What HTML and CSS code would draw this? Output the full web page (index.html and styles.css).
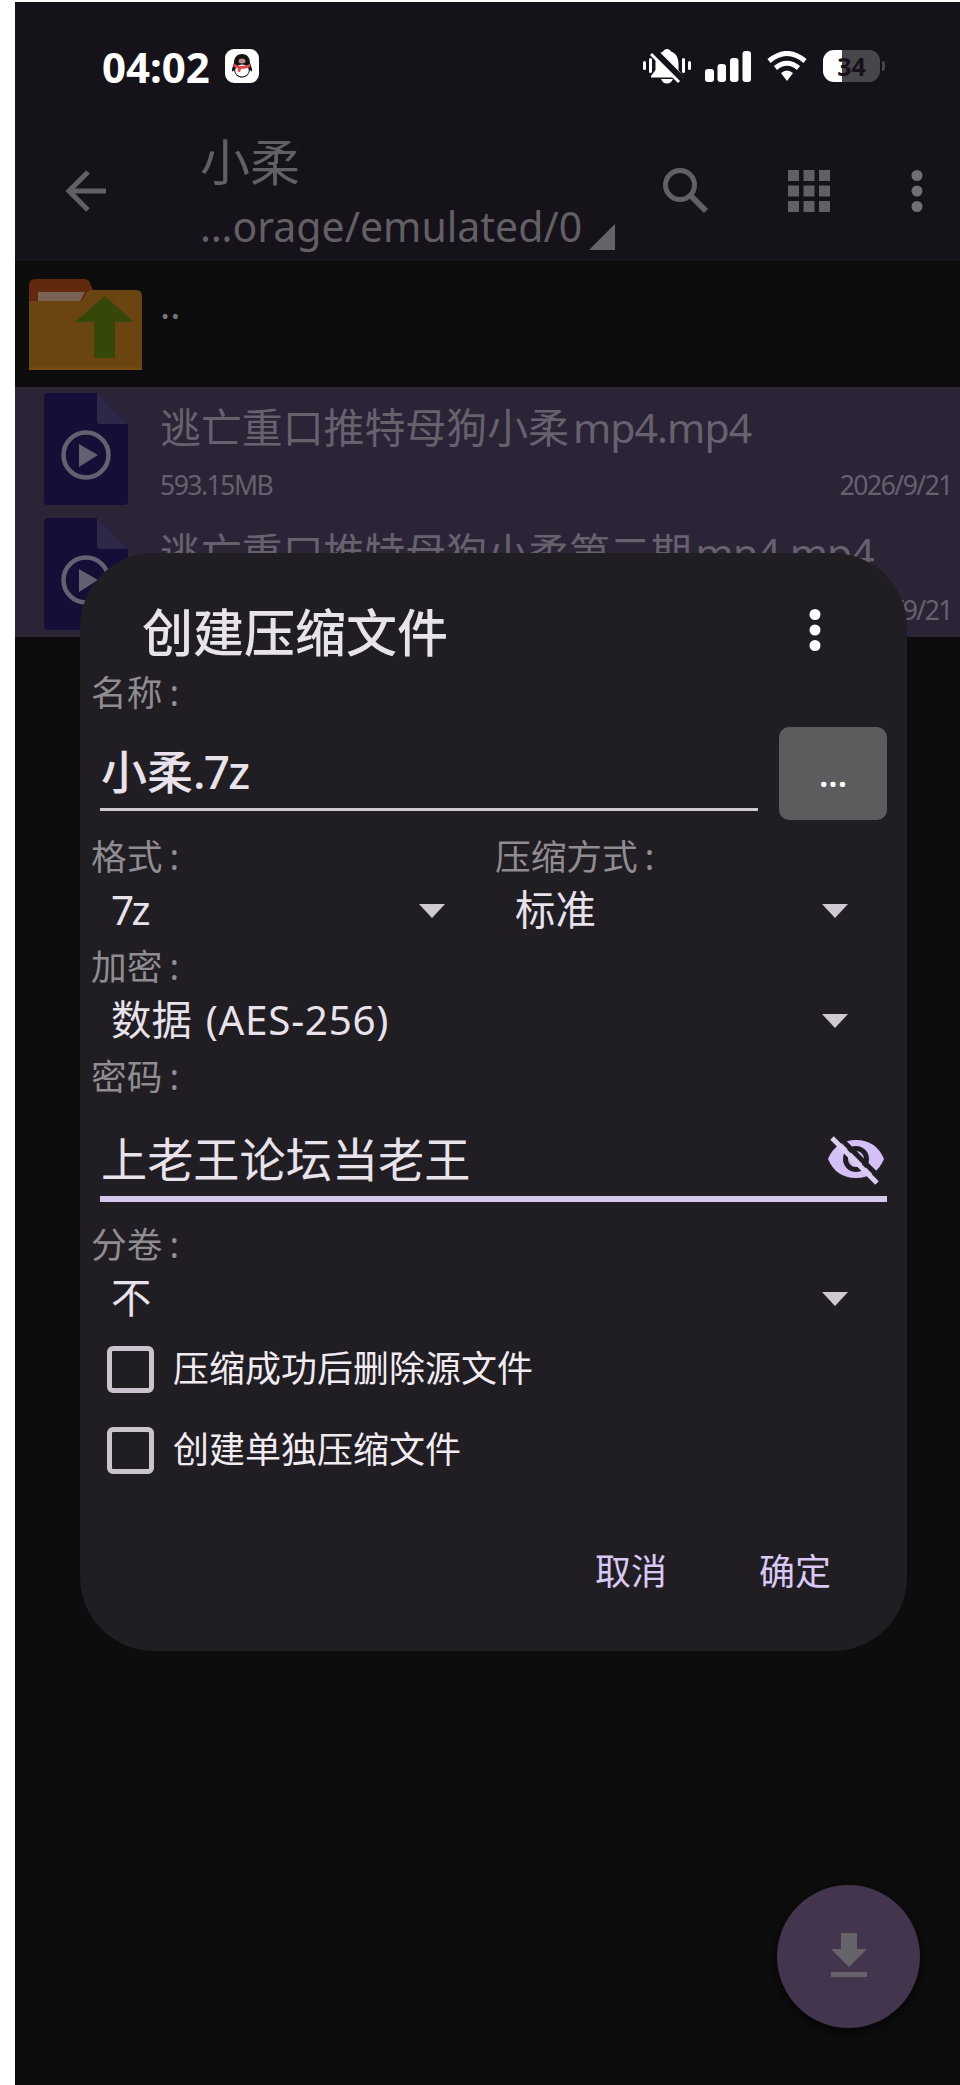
FILE: index.html
```html
<!DOCTYPE html>
<html lang="zh-CN">
<head>
<meta charset="utf-8">
<title>创建压缩文件</title>
<link rel="stylesheet" href="styles.css">
</head>
<body>
<div class="phone">
  <header class="top">
    <div class="status">
      <span class="time">04:02</span>
      <svg class="qq" width="34" height="34" viewBox="0 0 34 34">
        <rect width="34" height="34" rx="9" fill="#fff"/>
        <path d="M17 5C11.500 5 9 9 9 14L7 20C6.500 23 8 23 9 21C10 26 13 28.500 17 28.500S24 26 25 21C26 23 27.500 23 27 20L25 14C25 9 22.500 5 17 5Z" fill="#17120f"/>
        <ellipse cx="17" cy="21.500" rx="6.800" ry="6" fill="#fff"/>
        <ellipse cx="17" cy="12" rx="3.500" ry="2.500" fill="#b98d84"/>
        <path d="M9 15Q17 19 25 15L25 18Q21 20 16 20L15 23L12.500 22.500L13 19.500Q10 19 8.500 17.500Z" fill="#e2474a"/>
      </svg>
      <span class="grow"></span>
      <svg class="bell" width="50" height="36" viewBox="0 0 50 36">
        <g fill="#fff"><path d="M25 1C27 1 28 2 29 3.500C34 5 36.500 10 36.500 16V22L41 28V29.500H9V28L13.500 22V14C13.500 8 17 5 21 3.500C22 2 23 1 25 1Z"/><path d="M19 31H31Q29 35.500 25 35.500T19 31Z"/>
        <rect x="1" y="13" width="3" height="9" rx="1.500"/><rect x="7" y="10" width="3" height="15" rx="1.500"/><rect x="40" y="10" width="3" height="15" rx="1.500"/><rect x="46" y="13" width="3" height="9" rx="1.500"/></g>
        <path d="M11 3L39 31" stroke="#151219" stroke-width="8"/><path d="M9 6L37 34" stroke="#fff" stroke-width="3"/>
      </svg>
      <svg class="signal" width="46" height="31" viewBox="0 0 46 31" fill="#fff">
        <rect x="0" y="18" width="9" height="13" rx="3"/><rect x="12.500" y="13" width="8.500" height="18" rx="3"/><rect x="25" y="7" width="8.500" height="24" rx="3"/><rect x="37.500" y="0" width="8.500" height="31" rx="3"/>
      </svg>
      <svg class="wifi" width="40" height="30" viewBox="0 0 40 30">
        <path d="M2 10Q20 -5 38 10" fill="none" stroke="#fff" stroke-width="5"/><path d="M8.500 17Q20 7.500 31.500 17" fill="none" stroke="#fff" stroke-width="5"/><path d="M14 22Q20 17 26 22L20 30Z" fill="#fff"/>
      </svg>
      <span class="battery"><b>34</b></span><span class="nub"></span>
    </div>
    <div class="appbar">
      <svg class="back" width="42" height="42" viewBox="0 0 42 42" fill="none" stroke="#625f65" stroke-width="5"><path d="M41 21H4M23 2L4 21L23 40"/></svg>
      <div class="heading">
        <div class="folder">小柔</div>
        <div class="path"><span class="pathtext">…orage/emulated/0</span><svg width="26" height="26" viewBox="0 0 26 26"><path d="M26 0V26H0Z" fill="#656268"/></svg></div>
      </div>
      <svg class="search" width="46" height="46" viewBox="0 0 46 46" fill="none" stroke="#625f65"><circle cx="17" cy="17" r="14.500" stroke-width="5"/><path d="M27 27L43 43" stroke-width="6"/></svg>
      <svg class="gridicon" width="42" height="42" viewBox="0 0 42 42" fill="#625f65"><path d="M0 0h11v11H0zM15.500 0h11v11h-11zM31 0h11v11H31zM0 15.500h11v11H0zM15.500 15.500h11v11h-11zM31 15.500h11v11H31zM0 31h11v11H0zM15.500 31h11v11h-11zM31 31h11v11H31z"/></svg>
      <svg class="dots" width="12" height="42" viewBox="0 0 12 42" fill="#716e74"><circle cx="6" cy="5.500" r="5.500"/><circle cx="6" cy="21" r="5.500"/><circle cx="6" cy="36.500" r="5.500"/></svg>
    </div>
  </header>

  <main class="files">
    <div class="up">
      <svg width="113" height="91" viewBox="0 0 113 91">
        <path d="M0 30V6Q0 0 6 0H55Q59 0 61 4L66 16V30Z" fill="#612a0d"/>
        <path d="M0 22H50Q54 22 56 17Q58 11 64 11H107Q113 11 113 17V91H0Z" fill="#6a4512"/>
        <path d="M9 13H56L51 22H9Z" fill="#786353"/><path d="M0 88.500H113V91H0Z" fill="#7a4e12"/>
        <path d="M76 17L105 43H86V79H65V43H46Z" fill="#354709"/>
      </svg>
      <span class="dotdot">..</span>
    </div>
    <div class="file">
      <svg class="doc" width="84" height="112" viewBox="0 0 84 112"><path d="M4 0H53L84 31V108Q84 112 80 112H4Q0 112 0 108V4Q0 0 4 0Z" fill="#150e37"/><path d="M53 0L84 31H56Q53 31 53 28Z" fill="#2d2848"/><circle cx="42" cy="62" r="22.500" fill="none" stroke="#63606f" stroke-width="4.500"/><path d="M35 51L54 62L35 74Z" fill="#63606f"/></svg>
      <div class="info"><div class="name">逃亡重口推特母狗小柔<span class="ext">mp4.mp4</span></div><div class="meta"><span class="size">593.15MB</span><span>2026/9/21</span></div></div>
    </div>
    <div class="file">
      <svg class="doc" width="84" height="112" viewBox="0 0 84 112"><path d="M4 0H53L84 31V108Q84 112 80 112H4Q0 112 0 108V4Q0 0 4 0Z" fill="#150e37"/><path d="M53 0L84 31H56Q53 31 53 28Z" fill="#2d2848"/><circle cx="42" cy="62" r="22.500" fill="none" stroke="#63606f" stroke-width="4.500"/><path d="M35 51L54 62L35 74Z" fill="#63606f"/></svg>
      <div class="info"><div class="name">逃亡重口推特母狗小柔第二期<span class="ext">mp4.mp4</span></div><div class="meta"><span></span><span>2026/9/21</span></div></div>
    </div>
  </main>

  <div class="fab"><svg width="36" height="44" viewBox="0 0 36 44" fill="#67636a"><path d="M10 0H26V16H36L18 34L0 16H10Z"/><path d="M0 39H36V44H0Z"/></svg></div>

  <section class="dialog">
    <div class="titlebar"><h1>创建压缩文件</h1><svg width="12" height="42" viewBox="0 0 12 42" fill="#fff"><circle cx="6" cy="5.500" r="5.500"/><circle cx="6" cy="21" r="5.500"/><circle cx="6" cy="36.500" r="5.500"/></svg></div>
    <div class="label">名称<i>:</i></div>
    <div class="namerow"><div class="field">小柔<span class="seven">.7z</span></div><div class="more">...</div></div>
    <div class="pair">
      <div class="col left"><div class="label">格式<i>:</i></div><div class="select"><span class="fmt">7z</span><svg width="26" height="14" viewBox="0 0 26 14"><path d="M0 0H26L13 14Z"/></svg></div></div>
      <div class="col"><div class="label">压缩方式<i>:</i></div><div class="select"><span>标准</span><svg width="26" height="14" viewBox="0 0 26 14"><path d="M0 0H26L13 14Z"/></svg></div></div>
    </div>
    <div class="label">加密<i>:</i></div>
    <div class="select"><span>数据<span class="aes">(AES-256)</span></span><svg width="26" height="14" viewBox="0 0 26 14"><path d="M0 0H26L13 14Z"/></svg></div>
    <div class="label">密码<i>:</i></div>
    <div class="password"><span>上老王论坛当老王</span>
      <svg width="58" height="52" viewBox="0 0 58 52"><path d="M1 25Q9 6 29 6T57 25Q49 44 29 44T1 25Z" fill="#d4bff7"/><circle cx="29" cy="25" r="10.500" fill="none" stroke="#201d23" stroke-width="5"/><path d="M11 2L54 45" stroke="#201d23" stroke-width="5"/><path d="M5 4L50 49" stroke="#dccdf2" stroke-width="5"/></svg>
    </div>
    <div class="label">分卷<i>:</i></div>
    <div class="select"><span>不</span><svg width="26" height="14" viewBox="0 0 26 14"><path d="M0 0H26L13 14Z"/></svg></div>
    <div class="check"><span class="box"></span><span>压缩成功后删除源文件</span></div>
    <div class="check"><span class="box"></span><span>创建单独压缩文件</span></div>
    <div class="actions"><span>取消</span><span>确定</span></div>
  </section>
</div>
</body>
</html>
```
FILE: styles.css
```css
* { box-sizing: border-box; }
body { margin: 0; background: #fff; font-family: "Noto Sans", "Noto Sans CJK SC", sans-serif; }
svg { display: block; flex: none; }
.phone { position: relative; width: 945px; height: 2083px; margin: 2px 0 0 15px; background: #0d0d0e; overflow: hidden; white-space: nowrap; }
.top { height: 260px; background: #151219; border-bottom: 1px solid #0a090c; }
.status { display: flex; align-items: center; height: 128px; padding-left: 87px; }
.time { font-size: 42px; font-weight: 700; color: #fff; }
.qq { margin-left: 15px; }
.grow { flex: 1; }
.bell { margin-right: 13px; }
.signal { margin-right: 16px; }
.wifi { margin-right: 16px; }
.battery { width: 57px; height: 32px; border-radius: 11px; background: linear-gradient(90deg, #fff 0 19px, #49464b 19px); color: #151219; font-size: 25px; line-height: 32px; text-align: center; }
.nub { width: 3px; height: 10px; margin: 0 75px 0 2px; border-radius: 0 3px 3px 0; background: #49464b; }
.appbar { display: flex; height: 130px; align-items: flex-start; color: #625f65; }
.back { margin: 40px 0 0 50px; }
.heading { width: 401px; margin-left: 93px; }
.folder { height: 64px; font-size: 50px; line-height: 64px; }
.path { display: flex; height: 64px; font-size: 41px; line-height: 64px; align-items: flex-start; }
.path svg { margin: 30px 0 0 11px; }
.pathtext { width: 378px; }
.search { margin: 38px 0 0 62px; }
.gridicon { margin: 40px 0 0 79px; }
.dots { margin: 40px 0 0 81px; }
.up { display: flex; height: 125px; padding: 17px 0 0 14px; }
.dotdot { margin: 0 0 0 18px; font-size: 38px; line-height: 50px; color: #77757a; }
.file { display: flex; height: 125px; padding: 6px 8px 0 29px; background: #2b2336; color: #67616d; }
.info { flex: 1; margin-left: 32px; }
.name { height: 72px; font-size: 40.9px; line-height: 69px; }
.ext { margin-left: 4px; letter-spacing: -0.9px; }
.meta { display: flex; justify-content: space-between; height: 40px; font-size: 26.5px; line-height: 40px; letter-spacing: -1.5px; }
.fab { position: absolute; left: 762px; top: 1883px; display: flex; justify-content: center; align-items: center; width: 143px; height: 143px; border-radius: 50%; background: #43354d; box-shadow: 0 4px 12px #050506; }
.fab svg { margin-top: -3px; }
.dialog { position: absolute; left: 65px; top: 551px; width: 827px; height: 1098px; padding: 48px 20px 0; border-radius: 74px; background: #201d23; color: #e8e2eb; }
.titlebar { display: flex; height: 64px; justify-content: space-between; padding: 0 66px 0 42px; }
h1 { margin: 0; font-size: 51px; font-weight: 500; line-height: 63px; }
.titlebar svg { margin-top: 8px; }
.label { height: 54px; margin-left: -9px; font-size: 35.7px; line-height: 54px; color: #8f8c92; }
.label i { margin-left: 7px; font-style: normal; }
.namerow { display: flex; height: 110px; }
.field { width: 658px; height: 92px; padding: 17px 0 0 1px; border-bottom: 3px solid #d0c9d3; font-size: 46px; font-weight: 500; line-height: 70px; }
.seven { letter-spacing: -1.8px; }
.more { width: 108px; height: 93px; margin: 8px 0 0 21px; border-radius: 10px; background: #5c5b5d; color: #fff; font-size: 34px; font-weight: 600; line-height: 94px; text-align: center; }
.pair { display: flex; }
.left { width: 404px; }
.left .select { padding-right: 59px; }
.col:last-child { width: 383px; }
.select { display: flex; height: 56px; padding: 0 39px 0 11px; justify-content: space-between; align-items: center; font-size: 40.4px; line-height: 54px; }
.select > span { height: 56px; }
.select svg { fill: #d0c9d3; }
.fmt { letter-spacing: -2.5px; }
.aes { margin-left: 14px; letter-spacing: 0.7px; }
.password { display: flex; justify-content: space-between; height: 99px; margin-bottom: 15px; padding: 22px 2px 0 1px; border-bottom: 6px solid #d6c7ee; font-size: 46.2px; line-height: 70px; }
.password svg { margin-top: 9px; }
.check { display: flex; height: 81px; align-items: center; padding: 3px 0 0 7px; color: #f0ecf2; font-size: 36px; line-height: 76px; }
.box { width: 47px; height: 47px; margin-right: 19px; border: 5px solid #cac3cd; border-radius: 6px; }
.actions { display: flex; justify-content: flex-end; gap: 92px; padding: 43px 56px 0 0; color: #d9c8f3; font-size: 36px; line-height: 80px; }
```
